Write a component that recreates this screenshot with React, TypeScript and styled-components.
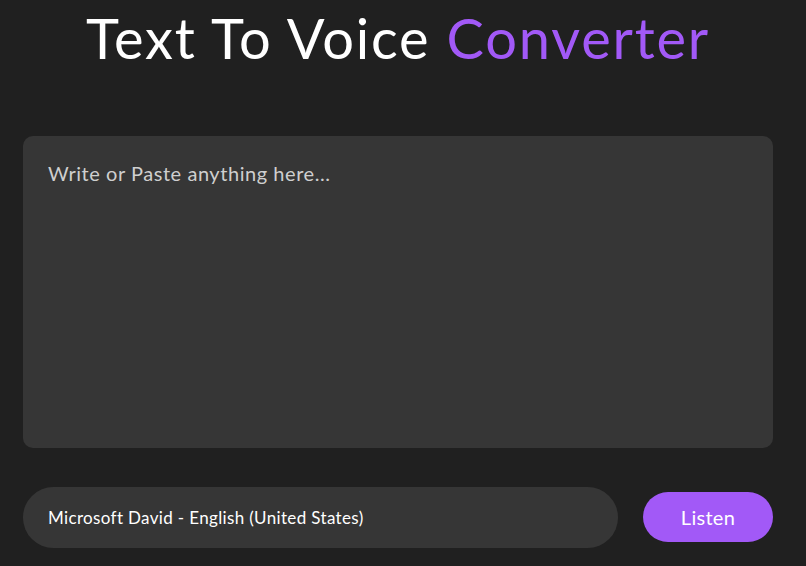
import React from "react";
import styled, { createGlobalStyle } from "styled-components";

const Global = createGlobalStyle`
  html, body { margin: 0; padding: 0; background: #202020; }
  body { font-family: "Lato", "Noto Sans", sans-serif; }
  * { box-sizing: border-box; }
`;

const Page = styled.div`
  width: 750px;
  margin-left: 23px;
  display: flex;
  flex-direction: column;
  height: 566px;
`;

const Title = styled.h1`
  margin: 6px 0 0;
  height: 64px;
  line-height: 64px;
  text-align: center;
  font-size: 56px;
  font-weight: 400;
  letter-spacing: 1.8px;
  color: #ffffff;
  white-space: nowrap;
`;

const Accent = styled.span`
  color: #a259f7;
`;

const TextArea = styled.textarea`
  margin-top: 66px;
  height: 312px;
  width: 100%;
  resize: none;
  border: none;
  outline: none;
  border-radius: 10px;
  background: #363636;
  color: #eeeeee;
  padding: 25px 25px;
  font-family: inherit;
  font-size: 20px;
  letter-spacing: 0.55px;
  &::placeholder { color: #cfcfcf; }
`;

const Row = styled.div`
  margin-top: 39px;
  display: flex;
  align-items: center;
  gap: 25px;
`;

const Select = styled.div`
  flex: 1;
  height: 61px;
  border-radius: 31px;
  background: #363636;
  color: #ffffff;
  display: flex;
  align-items: center;
  padding-left: 25px;
  font-size: 17px;
  letter-spacing: 0.35px;
`;

const Button = styled.button`
  width: 130px;
  height: 50px;
  margin-top: -1px;
  border: none;
  border-radius: 25px;
  background: #a259f7;
  color: #ffffff;
  font-family: inherit;
  font-size: 20px;
  letter-spacing: 0.3px;
`;

export default function App() {
  return (
    <>
      <Global />
      <Page>
        <Title>
          Text To Voice <Accent>Converter</Accent>
        </Title>
        <TextArea placeholder="Write or Paste anything here..." />
        <Row>
          <Select>Microsoft David - English (United States)</Select>
          <Button>Listen</Button>
        </Row>
      </Page>
    </>
  );
}
